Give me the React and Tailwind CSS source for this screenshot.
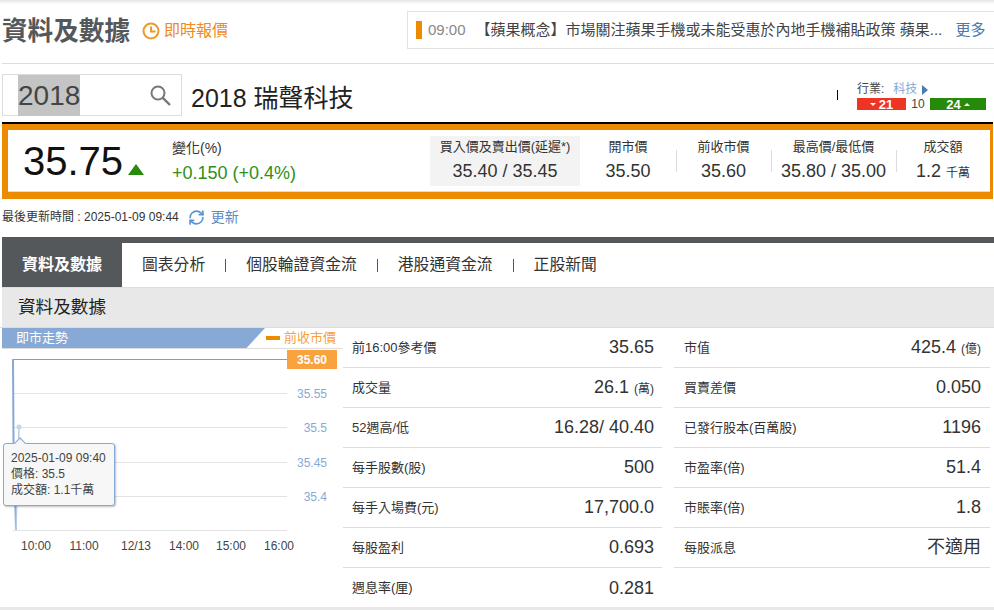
import React from 'react';
import { RefreshCw } from 'lucide-react';

const font = "font-['Liberation_Sans','Noto_Sans_CJK_TC',sans-serif]";

const quoteCells = [
  { label: '開市價', value: '35.50', w: 'w-[96px]' },
  { label: '前收市價', value: '35.60', w: 'w-[95px]', sep: true },
  { label: '最高價/最低價', value: '35.80 / 35.00', w: 'w-[125px]', sep: true },
  { label: '成交額', value: '1.2', unit: '千萬', w: 'w-[94px]', sep: true },
];

const leftRows = [
  { label: '前16:00參考價', value: '35.65' },
  { label: '成交量', value: '26.1', unit: '(萬)' },
  { label: '52週高/低', value: '16.28/ 40.40' },
  { label: '每手股數(股)', value: '500' },
  { label: '每手入場費(元)', value: '17,700.0' },
  { label: '每股盈利', value: '0.693' },
  { label: '週息率(厘)', value: '0.281' },
];

const rightRows = [
  { label: '市值', value: '425.4', unit: '(億)' },
  { label: '買賣差價', value: '0.050' },
  { label: '已發行股本(百萬股)', value: '1196' },
  { label: '市盈率(倍)', value: '51.4' },
  { label: '市賬率(倍)', value: '1.8' },
  { label: '每股派息', value: '不適用' },
];

const tabs = ['圖表分析', '個股輪證資金流', '港股通資金流', '正股新聞'];

const DataRow = ({ row, last, right }) => (
  <div className={`h-10 flex items-center justify-between ${right ? 'pl-[10px] pr-[9px]' : 'pl-[9px] pr-2'} ${last ? '' : 'border-b border-[#dddddd]'}`}>
    <span className="text-[13px] text-[#333333]">{row.label}</span>
    <span className="text-[18px] text-[#333333]">
      {row.value}
      {row.unit && <span className="text-[12px] ml-[5px]">{row.unit}</span>}
    </span>
  </div>
);

const Chart = () => (
  <div className="relative h-[212px]">
    <svg width="340" height="212" viewBox="0 349 340 212" className="block">
      {[393, 427, 462, 496, 530].map((y) => (
        <line key={y} x1="13" x2="287" y1={y + 0.5} y2={y + 0.5} stroke="#e3e3e3" strokeWidth="1" />
      ))}
      <line x1="13" x2="287" y1="359.5" y2="359.5" stroke="#ec8a00" strokeWidth="1" />
      <polyline points="13,359 13.5,440 16,530" fill="none" stroke="#86a9d6" strokeWidth="2" />
      <polyline points="16,530 19,427" fill="none" stroke="#b9cde6" strokeWidth="1.5" />
      <circle cx="19" cy="427" r="2.5" fill="#c5d6ea" />
      {[['35.55', 398], ['35.5', 432], ['35.45', 467], ['35.4', 501]].map(([t, y]) => (
        <text key={t} x="327" y={y} textAnchor="end" fontSize="12" fill="#86a9d6">{t}</text>
      ))}
      {[['10:00', 36], ['11:00', 84], ['12/13', 136], ['14:00', 184], ['15:00', 231], ['16:00', 279]].map(([t, x]) => (
        <text key={t} x={x} y="550" textAnchor="middle" fontSize="12" fill="#444444">{t}</text>
      ))}
    </svg>
    <div className="absolute left-[287px] top-[1px] w-[50px] h-[19px] bg-[#f9a33e] text-white text-[12px] font-bold flex items-center justify-center">
      35.60
    </div>
    {/* tooltip */}
    <div className="absolute left-[3px] top-[94px] w-[112px] h-[63px] bg-[#f7f7f7] border border-[#86a9d6] rounded-[3px] shadow-[1px_1px_2px_rgba(0,0,0,0.25)] pl-[7px] pt-[5px] text-[12px] leading-[16px] text-[#444444]">
      <div className="absolute left-[12px] -top-[5px] w-2 h-2 bg-[#f7f7f7] border-l border-t border-[#86a9d6] rotate-45" />
      <div className="relative mt-[1px]">2025-01-09 09:40</div>
      <div>價格: 35.5</div>
      <div>成交額: 1.1千萬</div>
    </div>
  </div>
);

export default function App() {
  return (
    <div className={`${font} w-[994px] h-[610px] overflow-hidden bg-white text-[#222222]`}>
      <div className="h-[4px] bg-gradient-to-b from-[#e4e4e4] to-white" />

      {/* page header */}
      <div className="ml-[2px] h-[60px] border-b border-[#dddddd] flex items-center pb-[6px]">
        <h1 className="text-[25.6px] leading-[28px] font-bold text-[#55585b] w-[140px] shrink-0 whitespace-nowrap">資料及數據</h1>
        <svg width="18" height="18" viewBox="0 0 18 18" className="shrink-0">
          <circle cx="9" cy="9" r="7.5" fill="none" stroke="#ec9a2a" strokeWidth="2" />
          <path d="M9 4.5V9.5H13.5" fill="none" stroke="#ec9a2a" strokeWidth="2" />
        </svg>
        <span className="ml-[4px] text-[16px] text-[#f08a1d] w-[64px] shrink-0 whitespace-nowrap">即時報價</span>
        <div className="ml-[179px] flex-1 h-[38px] border border-[#e2e2e2] border-r-0 flex items-center pl-[8px] -mt-[1px]">
          <span className="w-[6px] h-[18px] bg-[#ec8a00] shrink-0" />
          <span className="ml-[6px] text-[15px] text-[#888888] shrink-0">09:00</span>
          <span className="ml-[10px] text-[15px] text-[#444444] w-[470px] whitespace-nowrap">【蘋果概念】市場關注蘋果手機或未能受惠於內地手機補貼政策 蘋果...</span>
          <span className="ml-[10px] text-[15px] text-[#4a7ab0] shrink-0">更多</span>
        </div>
      </div>

      {/* stock search row */}
      <div className="h-[58px] ml-[2px] flex items-start">
        <div className="mt-[10px] w-[180px] h-[42px] border border-[#dddddd] flex items-center pl-[15px] pr-[10px] justify-between">
          <span className="text-[28px] leading-[41px] h-[41px] bg-[#c4c4c4] text-[#444444]">2018</span>
          <svg width="21" height="21" viewBox="0 0 21 21" fill="none" stroke="#777777" className="shrink-0">
            <circle cx="8" cy="8" r="6.5" strokeWidth="2" />
            <path d="M12.8 12.8L20 20" strokeWidth="2.4" />
          </svg>
        </div>
        <div className="ml-[9px] mt-[18px] text-[25px] leading-[32px] text-[#222222] w-[162px] whitespace-nowrap">2018 瑞聲科技</div>
        <div className="ml-[484px] mt-[26px] w-[1px] h-[10px] bg-black" />
        <div className="ml-[19px] mt-[18px] w-[129px]">
          <div className="flex items-center h-[15px] text-[12px] leading-[15px]">
            <span className="text-[#444444]">行業:</span>
            <span className="ml-[9px] text-[#86a9d6]">科技</span>
            <span className="ml-[5px] w-0 h-0 border-y-[5px] border-y-transparent border-l-[6px] border-l-[#4a7ab0]" />
          </div>
          <div className="flex items-center h-[12px] mt-[1px] text-[13px] font-bold text-white">
            <span className="w-[49px] h-[12px] bg-[#ee3524] flex items-center justify-center gap-[3px] leading-none">
              <span className="w-0 h-0 border-x-[3px] border-x-transparent border-t-[3px] border-t-white" />21
            </span>
            <span className="w-[24px] text-center text-[12px] font-normal text-[#444444]">10</span>
            <span className="w-[56px] h-[12px] bg-[#268a0a] flex items-center justify-center gap-[3px] leading-none">
              24<span className="w-0 h-0 border-x-[3px] border-x-transparent border-b-[3px] border-b-white" />
            </span>
          </div>
        </div>
      </div>

      {/* quote box */}
      <div className="ml-[2px] mr-[1px] border-t-2 border-black">
        <div className="h-[75px] border-[#ec8a00] border-t-[6px] border-b-[7px] border-l-[6px] border-r-[3px] bg-white shadow-[inset_0_-1px_0_#dddddd] flex items-start">
          <div className="w-[120px] pl-[15px] text-[40px] leading-[62px] text-[#111111] shrink-0">35.75</div>
          <div className="shrink-0 w-[44px] pt-[34px]">
            <div className="w-0 h-0 border-x-[8.5px] border-x-transparent border-b-[11px] border-b-[#268a0a]" />
          </div>
          <div className="w-[258px] shrink-0 pt-[8px]">
            <div className="text-[14px] leading-[20px] text-[#333333]">變化(%)</div>
            <div className="mt-[3px] text-[18px] leading-[24px] text-[#2f8f17]">+0.150 (+0.4%)</div>
          </div>
          <div className="w-[150px] h-[50px] mt-[6px] bg-[#f3f3f3] text-center shrink-0">
            <div className="text-[13px] leading-[22px] text-[#333333] whitespace-nowrap">買入價及賣出價(延遲*)</div>
            <div className="text-[18px] leading-[26px] text-[#333333]">35.40 / 35.45</div>
          </div>
          {quoteCells.map((c) => (
            <div key={c.label} className={`${c.w} shrink-0 relative mt-[6px] text-center`}>
              {c.sep && <span className="absolute left-0 top-[14px] w-[1px] h-[22px] bg-[#dddddd]" />}
              <div className="text-[13px] leading-[22px] text-[#333333]">{c.label}</div>
              <div className="text-[18px] leading-[26px] text-[#333333] whitespace-nowrap">
                {c.value}
                {c.unit && <span className="text-[12px] ml-[5px]">{c.unit}</span>}
              </div>
            </div>
          ))}
        </div>
      </div>

      {/* last update */}
      <div className="h-[38px] ml-[2px] pb-[2px] flex items-center">
        <span className="text-[12px] text-[#333333]">最後更新時間 : 2025-01-09 09:44</span>
        <RefreshCw size={17} strokeWidth={2.4} color="#5b95cf" className="ml-[9px]" />
        <span className="ml-[6px] text-[14px] text-[#5b8cc4]">更新</span>
      </div>

      {/* tabs */}
      <div className="ml-[2px] border-t-[6px] border-[#55585b]">
        <div className="h-[45px] border-b border-[#dddddd] flex items-center">
          <div className="w-[120px] h-full bg-[#55585b] text-white text-[16px] font-bold flex items-center justify-center">資料及數據</div>
          {tabs.map((t, i) => (
            <React.Fragment key={t}>
              {i > 0 && <span className="w-[1px] h-[13px] bg-[#555555]" />}
              <span className="px-5 text-[15.8px] text-[#333333] whitespace-nowrap">{t}</span>
            </React.Fragment>
          ))}
        </div>
        <div className="h-[39px] bg-[#e8e8e8] flex items-center pl-[16px] text-[17.6px] text-[#222222]">資料及數據</div>
      </div>

      {/* data */}
      <div className="flex h-[280px] border-t border-[#dddddd]">
        <div className="w-[343px] shrink-0 pl-[2px]">
          <div className="h-[21px] flex items-center border-b border-[#dddddd]">
            <div className="w-[263px] h-[20px] bg-[#86a9d6] [clip-path:polygon(0_0,100%_0,93%_100%,0_100%)] text-white text-[13px] leading-[20px] pl-[14px]">即市走勢</div>
            <span className="ml-[1px] w-[14px] h-[4px] bg-[#ec8a00]" />
            <span className="ml-[4px] text-[13px] text-[#f7a23f] whitespace-nowrap">前收市價</span>
          </div>
          <div className="-ml-[2px]">
            <Chart />
          </div>
        </div>
        <div className="w-[319px] shrink-0">
          {leftRows.map((r, i) => (
            <DataRow key={r.label} row={r} last={i === leftRows.length - 1} />
          ))}
        </div>
        <div className="w-[316px] ml-[12px] shrink-0">
          {rightRows.map((r) => (
            <DataRow key={r.label} row={r} right />
          ))}
        </div>
      </div>
      <div className="h-[3px] bg-[#e8e8e8]" />
    </div>
  );
}
